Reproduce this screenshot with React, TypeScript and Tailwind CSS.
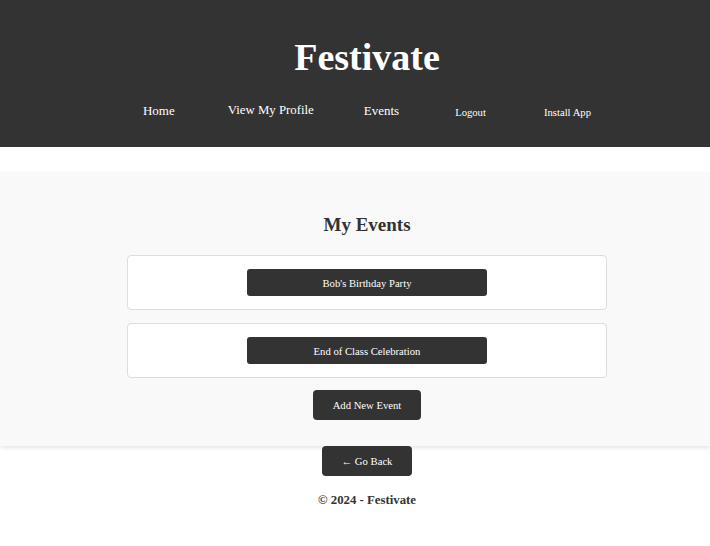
import React from "react";

const F = "[font-family:'Liberation_Serif','Times_New_Roman',serif]";

export default function App() {
  const btn = `${F} bg-[#333333] text-white text-[10.67px] leading-[12px]`;
  return (
    <div className={`min-h-[546px] bg-white ${F}`}>
      <header className="bg-[#333333] h-[147px] pt-[35px] pl-[24px] flex flex-col items-center">
        <h1 className="text-white font-bold text-[38px] leading-[44px]">Festivate</h1>
        <nav className="mt-[24px] flex items-start text-white">
          <a className="text-[13px] leading-[15px]">Home</a>
          <a className="ml-[53px] text-[12.8px] leading-[15px]">View My Profile</a>
          <a className="ml-[50px] text-[13px] leading-[15px]">Events</a>
          <button className={`ml-[56px] mt-[3px] ${F} text-[10.67px] leading-[12px] text-white`}>Logout</button>
          <button className={`ml-[58px] mt-[3px] ${F} text-[10.67px] leading-[12px] text-white`}>Install App</button>
        </nav>
      </header>

      <main className="mt-[25px] bg-[#f9f9f9] pt-[42px] pb-[26px] pl-[24px] flex flex-col items-center shadow-[0_2px_4px_rgba(0,0,0,0.1)]">
        <h2 className="text-[#333333] font-bold text-[19px] leading-[22px]">My Events</h2>
        <div className="mt-[19px] flex flex-col gap-[13px]">
          {["Bob's Birthday Party", "End of Class Celebration"].map((t) => (
            <div
              key={t}
              className="w-[480px] h-[55px] bg-white border border-[#dddddd] rounded-[4px] flex items-center justify-center"
            >
              <button className={`w-[240px] h-[27px] rounded-[3px] ${btn}`}>{t}</button>
            </div>
          ))}
        </div>
        <button className={`mt-[12px] h-[30px] px-[20px] rounded-[4px] ${btn}`}>Add New Event</button>
      </main>

      <div className="pl-[24px] flex flex-col items-center">
        <button className={`h-[30px] w-[90px] rounded-[4px] ${btn}`}>← Go Back</button>
        <footer className="mt-[17px] text-[#333333] font-bold text-[12.8px] leading-[15px]">© 2024 - Festivate</footer>
      </div>
    </div>
  );
}
